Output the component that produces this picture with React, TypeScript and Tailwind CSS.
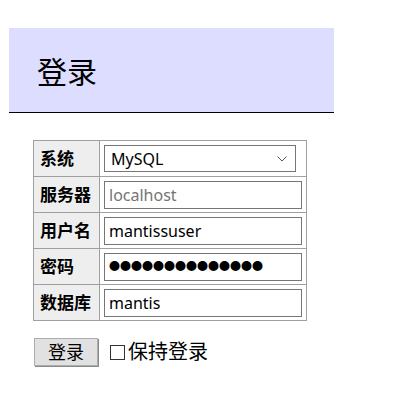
import React from "react";

const rows = [
  { label: "服务器", value: "localhost", placeholder: true },
  { label: "用户名", value: "mantissuser" },
  { label: "密码", value: "●●●●●●●●●●●●●●", password: true },
  { label: "数据库", value: "mantis" },
];

const App = () => {
  return (
    <div
      className="w-[408px] h-[408px] bg-white text-black"
      style={{ fontFamily: '"Noto Sans", "Noto Sans CJK SC", sans-serif' }}
    >
      <div className="pt-[28px] pl-[9px]">
        <div className="w-[325px] h-[85px] bg-[#ddddff] border-b border-black flex items-center pl-[28px] pt-[3px]">
          <h1 className="text-[30px] leading-none font-normal">登录</h1>
        </div>
      </div>

      <table className="ml-[33px] mt-[27px] border-collapse text-[16px]">
        <tbody>
          <tr className="h-[36px]">
            <td className="w-[66px] border border-[#a0a0a0] bg-[#eeeeee] font-bold text-[17px] pl-[6px] pr-[4px]">
              系统
            </td>
            <td className="w-[207px] border border-[#a0a0a0] px-[4px]">
              <div className="w-[192px] h-[27px] border border-[#767676] flex items-center justify-between pl-[6px] pr-[8px]">
                <span>MySQL</span>
                <svg width="10" height="6" viewBox="0 0 10 6" fill="none" stroke="#555" strokeWidth="1">
                  <path d="M0.5 0.5 L5 5 L9.5 0.5" />
                </svg>
              </div>
            </td>
          </tr>
          {rows.map((r) => (
            <tr key={r.label} className="h-[36px]">
              <td className="border border-[#a0a0a0] bg-[#eeeeee] font-bold text-[17px] pl-[6px] pr-[4px] whitespace-nowrap">
                {r.label}
              </td>
              <td className="border border-[#a0a0a0] px-[4px]">
                <div
                  className={
                    "w-[198px] h-[28px] border border-[#767676] flex items-center pl-[4px] " +
                    (r.placeholder ? "text-[#757575]" : "")
                  }
                >
                  <span className={r.password ? "text-[11px]" : ""}>{r.value}</span>
                </div>
              </td>
            </tr>
          ))}
        </tbody>
      </table>

      <div className="ml-[34px] mt-[17px] flex items-center">
        <button className="w-[64px] h-[28px] bg-[#e1e1e1] border border-[#adadad] shadow-[1px_1px_0_#8a8a8a] text-[18px] leading-none">
          登录
        </button>
        <div className="ml-[12px] w-[15px] h-[15px] border border-[#333] bg-white" />
        <span className="ml-[3px] text-[20px] leading-none">保持登录</span>
      </div>
    </div>
  );
};

export default App;
